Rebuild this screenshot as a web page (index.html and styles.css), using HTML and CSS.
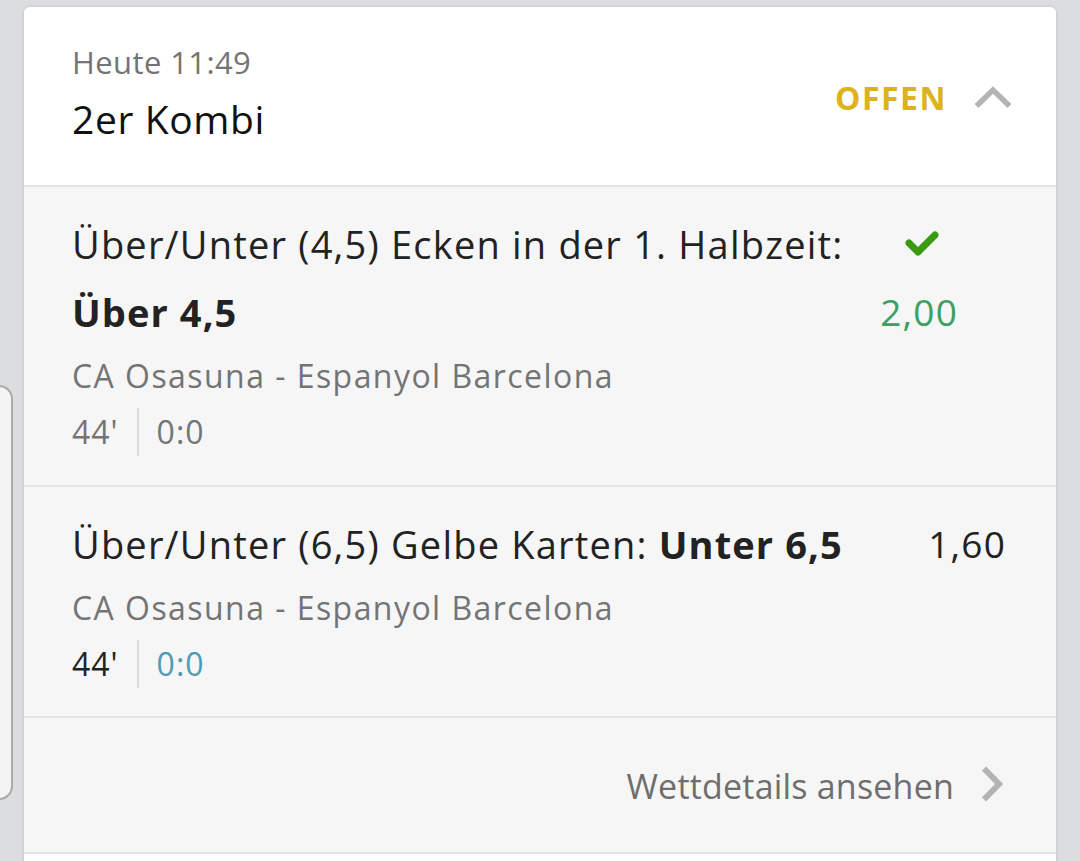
FILE: index.html
```html
<!DOCTYPE html>
<html lang="de">
<head>
<meta charset="utf-8">
<link rel="stylesheet" href="styles.css">
<title>2er Kombi</title>
</head>
<body>
<div class="carousel">
  <div class="prev-card"></div>
  <section class="bet-card">
    <header class="bet-header">
      <div class="bet-title">
        <div class="bet-date">Heute 11:49</div>
        <div class="bet-type">2er Kombi</div>
      </div>
      <div class="bet-status">
        <span class="status-label">OFFEN</span>
        <svg class="chev-up" width="38" height="24" viewBox="0 0 38 24"><polyline points="2.5,21 19,5 35.5,21" fill="none" stroke="#b4b4b4" stroke-width="5.5"/></svg>
      </div>
    </header>
    <div class="selection">
      <div class="sel-main">
        <div class="sel-market">Über/Unter (4,5) Ecken in der 1. Halbzeit: <b>Über 4,5</b></div>
        <div class="sel-event">CA Osasuna - Espanyol Barcelona</div>
        <div class="sel-meta"><span class="minute">44'</span><span class="score">0:0</span></div>
      </div>
      <div class="sel-odds won-col">
        <svg class="check" width="36" height="30" viewBox="0 0 36 30"><polyline points="5,15 14,24 31,7" fill="none" stroke="#3a9a12" stroke-width="7" stroke-linecap="round" stroke-linejoin="round"/></svg>
        <div class="odds odds-won">2,00</div>
      </div>
    </div>
    <div class="selection">
      <div class="sel-main">
        <div class="sel-market">Über/Unter (6,5) Gelbe Karten: <b>Unter 6,5</b></div>
        <div class="sel-event">CA Osasuna - Espanyol Barcelona</div>
        <div class="sel-meta live"><span class="minute">44'</span><span class="score">0:0</span></div>
      </div>
      <div class="sel-odds">
        <div class="odds">1,60</div>
      </div>
    </div>
    <a class="bet-footer" href="#">
      <span>Wettdetails ansehen</span>
      <svg class="chev-right" width="22" height="36" viewBox="0 0 22 36"><polyline points="3,2.5 18,18 3,33.5" fill="none" stroke="#b4b4b4" stroke-width="6"/></svg>
    </a>
    <div class="bet-after"></div>
  </section>
</div>
</body>
</html>
```
FILE: styles.css
```css
html, body {
  margin: 0;
  padding: 0;
}
body {
  background: #dcdddf;
  font-family: "Open Sans", "Noto Sans", sans-serif;
  color: #222;
  overflow: hidden;
  height: 861px;
}
.carousel {
  display: flex;
  align-items: flex-start;
  gap: 11px;
}
.prev-card {
  flex: none;
  width: 60px;
  margin-left: -47px;
  margin-top: 385px;
  height: 415px;
  box-sizing: border-box;
  background: #f4f4f4;
  border: 2px solid #ababab;
  border-radius: 14px;
}
.bet-card {
  flex: none;
  width: 1032px;
  margin-top: 7px;
  background: #f6f6f6;
  border-radius: 6px 6px 0 0;
  box-shadow: 0 0 3px rgba(0,0,0,0.15);
  overflow: hidden;
}
.bet-header {
  background: #fff;
  display: flex;
  align-items: center;
  justify-content: space-between;
  padding: 35px 44px 41px 48px;
  border-bottom: 2px solid #e4e4e4;
}
.bet-date {
  font-size: 31px;
  line-height: 40px;
  letter-spacing: 0.4px;
  color: #747474;
}
.bet-type {
  margin-top: 12px;
  font-size: 39px;
  line-height: 50px;
  letter-spacing: 0.6px;
  color: #111;
}
.bet-status {
  display: flex;
  align-items: center;
  gap: 27px;
  margin-top: 8px;
}
.status-label {
  font-size: 32px;
  font-weight: 700;
  letter-spacing: 1.5px;
  color: #dcb31a;
}
.chev-up { display: block; }
.selection {
  display: flex;
  padding: 23px 50px 24px 48px;
  border-bottom: 2px solid #e4e4e4;
}
.selection:first-of-type {
  padding-bottom: 25px;
}
.sel-main {
  flex: 1;
  min-width: 0;
}
.sel-market {
  font-size: 38px;
  line-height: 68px;
  letter-spacing: 1.2px;
  color: #222;
}
.sel-market b { font-weight: 700; letter-spacing: 1.1px; }
.sel-event {
  margin-top: 2px;
  font-size: 32px;
  line-height: 56px;
  letter-spacing: 1.45px;
  color: #747474;
}
.sel-meta {
  display: flex;
  align-items: center;
  font-size: 32px;
  line-height: 56px;
  letter-spacing: 1px;
  color: #747474;
}
.minute {
  padding-right: 18px;
}
.score {
  padding-left: 18px;
  border-left: 2px solid #dadada;
  line-height: 48px;
}
.live .minute { color: #222; }
.live .score { color: #4f9bb3; }
.sel-odds {
  flex: none;
  margin-left: 24px;
}
.won-col {
  display: flex;
  flex-direction: column;
  align-items: center;
  margin-right: 48px;
}
.check {
  display: block;
  margin-top: 18px;
  margin-bottom: 20px;
  margin-left: 6px;
}
.odds {
  font-size: 37px;
  line-height: 68px;
  letter-spacing: 1.2px;
  color: #222;
}
.odds-won { color: #3aa064; }
.bet-footer {
  display: flex;
  align-items: center;
  justify-content: flex-end;
  gap: 27px;
  height: 134px;
  padding-right: 53px;
  font-size: 34px;
  letter-spacing: 0.2px;
  color: #6e6e6e;
  text-decoration: none;
  border-bottom: 2px solid #e4e4e4;
}
.bet-footer span { margin-top: 2px; }
.chev-right { display: block; margin-top: -2px; }
.bet-after {
  background: #fff;
  height: 40px;
}
```
